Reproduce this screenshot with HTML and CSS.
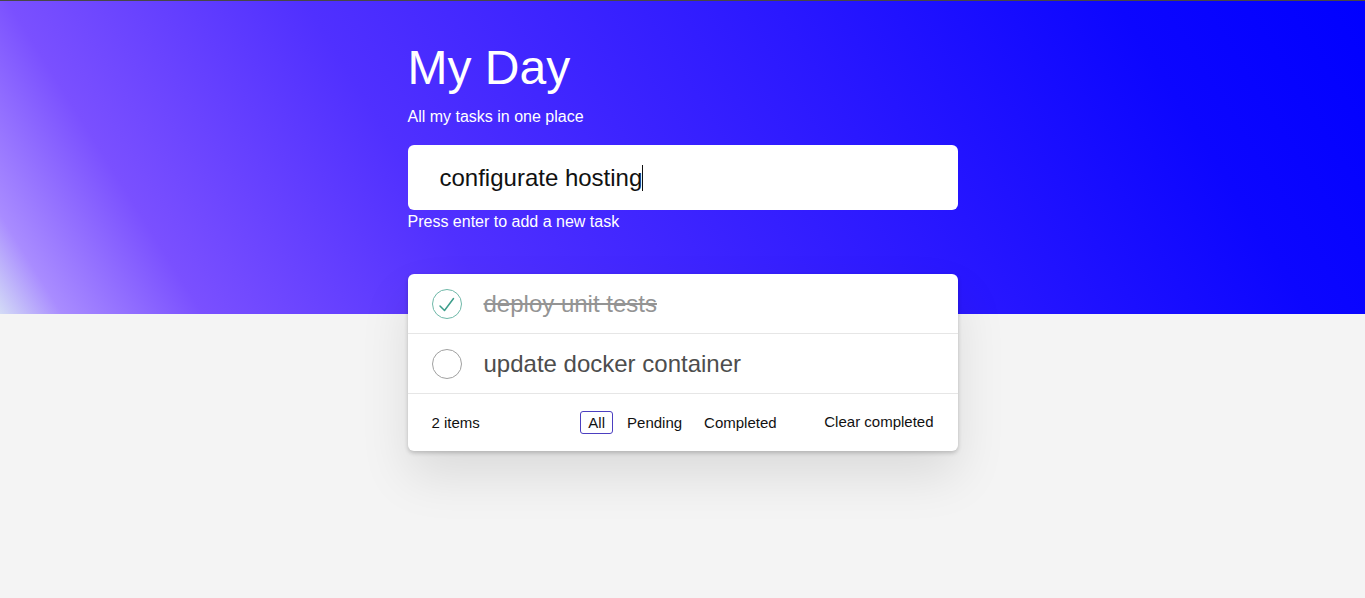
FILE: index.html
```html
<!DOCTYPE html>
<html lang="en">
<head>
<meta charset="utf-8">
<title>My Day</title>
<link rel="stylesheet" href="styles.css">
</head>
<body>
<main class="app">
  <header class="app-header">
    <h1 class="title">My Day</h1>
    <p class="subtitle">All my tasks in one place</p>
  </header>
  <div class="new-task">
    <div class="new-task-input"><span class="typed">configurate hosting</span><span class="caret"></span></div>
    <p class="hint">Press enter to add a new task</p>
  </div>
  <section class="card">
    <ul class="todo-list">
      <li class="todo done">
        <span class="check">
          <svg viewBox="0 0 30 30" width="30" height="30"><circle cx="15" cy="15" r="14.5" fill="none" stroke="#6fb8a8" stroke-width="1"/><polyline points="8,17 12.5,21.5 21.5,9.5" fill="none" stroke="#3d9e8b" stroke-width="1.5" stroke-linecap="round" stroke-linejoin="round"/></svg>
        </span>
        <span class="todo-text">deploy unit tests</span>
      </li>
      <li class="todo">
        <span class="check">
          <svg viewBox="0 0 30 30" width="30" height="30"><circle cx="15" cy="15" r="14.5" fill="none" stroke="#a0a0a0" stroke-width="1"/></svg>
        </span>
        <span class="todo-text">update docker container</span>
      </li>
    </ul>
    <footer class="card-footer">
      <span class="count">2 items</span>
      <nav class="filters">
        <a class="filter selected">All</a>
        <a class="filter">Pending</a>
        <a class="filter">Completed</a>
      </nav>
      <a class="clear">Clear completed</a>
    </footer>
  </section>
</main>
</body>
</html>
```

FILE: styles.css
```css
* { box-sizing: border-box; }

html, body { height: 100%; }

body {
  margin: 0;
  border-top: 1px solid #474747;
  font-family: "Liberation Sans", Arial, sans-serif;
  color: #111;
  background:
    linear-gradient(58deg, #d3dbf6 0%, #a98cff 4%, #7a50ff 13%, #5030ff 32%, #2a18ff 62%, #0c06ff 84%, #0000ff 100%) top left / 100% 314px no-repeat,
    #f4f4f4;
}

.app {
  width: 550px;
  margin: 0 auto;
  padding-top: 39px;
}

.title {
  margin: 0;
  font-size: 48px;
  font-weight: normal;
  line-height: 55px;
  color: #fff;
}

.subtitle {
  margin: 13px 0 0;
  font-size: 16px;
  line-height: 18px;
  color: #fff;
}

.new-task { margin-top: 19px; }

.new-task-input {
  height: 65px;
  background: #fff;
  border-radius: 6px;
  padding: 0 32px;
  display: flex;
  align-items: center;
  font-size: 24px;
  color: #111;
}

.caret {
  display: inline-block;
  width: 1px;
  height: 26px;
  background: #111;
}

.hint {
  margin: 3px 0 0;
  font-size: 16px;
  line-height: 18px;
  color: #fff;
}

.card {
  margin-top: 43px;
  background: #fff;
  border-radius: 6px;
  box-shadow: 0 2px 4px rgba(0, 0, 0, 0.2), 0 25px 50px rgba(0, 0, 0, 0.1);
}

.todo-list {
  list-style: none;
  margin: 0;
  padding: 0;
}

.todo {
  height: 60px;
  border-bottom: 1px solid #e6e6e6;
  display: flex;
  align-items: center;
  padding: 0 24px;
  gap: 22px;
}

.check {
  width: 30px;
  height: 30px;
  display: flex;
}

.todo-text {
  font-size: 24px;
  color: #4d4d4d;
}

.done .todo-text {
  color: #949494;
  text-decoration: line-through;
}

.card-footer {
  height: 57px;
  padding: 0 24px 1px;
  display: grid;
  grid-template-columns: 1fr auto 1fr;
  align-items: center;
  font-size: 15px;
  color: #111;
}

.filters { display: flex; }

.filter {
  margin: 3px;
  padding: 3px 7px;
  line-height: 15px;
  border: 1px solid transparent;
  border-radius: 3px;
  color: #111;
  cursor: pointer;
}

.filter.selected { border-color: #4c3fc0; }

.clear {
  justify-self: end;
  margin-top: -2px;
  color: #111;
  cursor: pointer;
}
```
